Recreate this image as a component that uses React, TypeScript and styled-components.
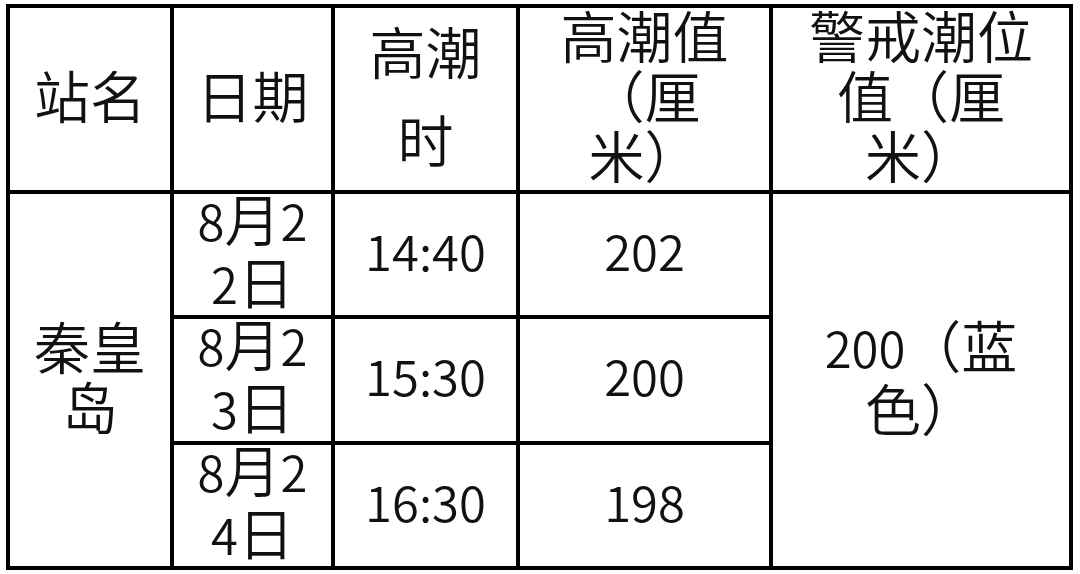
import React from "react";
import styled, { createGlobalStyle } from "styled-components";

const Global = createGlobalStyle`
  html, body {
    margin: 0;
    padding: 0;
    background: #ffffff;
  }
  body {
    font-family: "Noto Sans CJK SC", "Noto Sans", sans-serif;
    color: #111111;
  }
`;

const Page = styled.div`
  padding: 4px 7px 4px 6px;
  width: 1080px;
  height: 574px;
  box-sizing: border-box;
`;

const Table = styled.div`
  display: grid;
  grid-template-columns: 160px 157px 181px 249px 296px;
  grid-template-rows: 182px 121px 122px 121px;
  gap: 4px;
  padding: 4px;
  background: #000000;
  width: 1067px;
  box-sizing: border-box;
`;

const Cell = styled.div<{ $lh?: number; $row?: string; $col?: number }>`
  background: #ffffff;
  display: flex;
  align-items: center;
  justify-content: center;
  text-align: center;
  padding: 0 16px 10px;
  font-size: 56px;
  font-weight: 350;
  line-height: ${(p) => p.$lh ?? 60}px;
  text-spacing-trim: space-all;
  line-break: strict;
  word-break: break-all;
  overflow: visible;
  ${(p) => (p.$row ? `grid-row: ${p.$row};` : "")}
  ${(p) => (p.$col ? `grid-column: ${p.$col};` : "")}
`;

const Num = styled.span`
  font-size: 49px;
`;

const rows = [
  { day: "22", time: "14:40", value: "202" },
  { day: "23", time: "15:30", value: "200" },
  { day: "24", time: "16:30", value: "198" },
];

export default function App() {
  return (
    <Page>
      <Global />
      <Table>
        <Cell>站名</Cell>
        <Cell>日期</Cell>
        <Cell $lh={88}>高潮时</Cell>
        <Cell>高潮值（厘米）</Cell>
        <Cell>警戒潮位值（厘米）</Cell>

        <Cell $row="2 / span 3" $col={1}>
          秦皇岛
        </Cell>
        {rows.map((r, i) => (
          <React.Fragment key={r.day}>
            <Cell $row={String(i + 2)} $col={2}>
              <span>
                <Num>8</Num>月<Num>{r.day}</Num>日
              </span>
            </Cell>
            <Cell $row={String(i + 2)} $col={3}>
              <Num>{r.time}</Num>
            </Cell>
            <Cell $row={String(i + 2)} $col={4}>
              <Num>{r.value}</Num>
            </Cell>
          </React.Fragment>
        ))}
        <Cell $row="2 / span 3" $col={5}>
          <span>
            <Num>200</Num>（蓝色）
          </span>
        </Cell>
      </Table>
    </Page>
  );
}
